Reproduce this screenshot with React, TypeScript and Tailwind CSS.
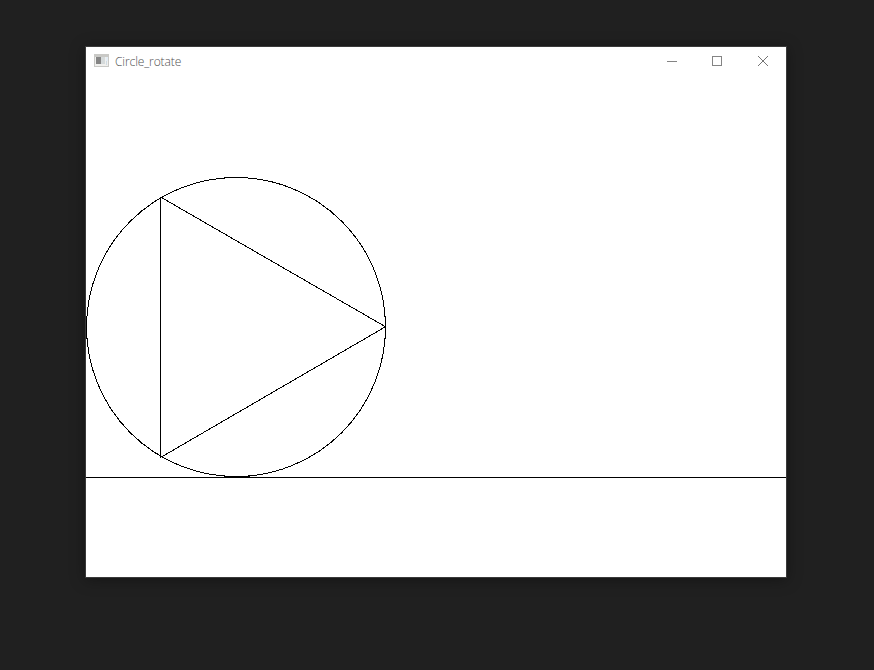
export default function App() {
  return (
    <div className="flex h-[670px] w-[874px] justify-center overflow-hidden bg-[#202020] pt-[46px] pr-0.5">
      <main className="flex h-[532px] w-[702px] flex-col border border-[#3a3a3a] bg-white shadow-[0_2px_14px_rgba(0,0,0,0.35)]">
        <header className="flex h-[30px] shrink-0 items-center justify-between pl-2">
          <div className="flex items-center gap-[6px]">
            <svg width="15" height="13" viewBox="0 0 15 13" shapeRendering="crispEdges" className="-mt-[3px]">
              <rect x="0" y="0" width="15" height="13" fill="#c9c9c6" />
              <rect x="1" y="3" width="13" height="9" fill="#f0f0ee" />
              <rect x="2" y="3" width="5" height="7" fill="#858585" />
              <rect x="7" y="3" width="4" height="7" fill="#d5dadb" />
              <rect x="12" y="3" width="2" height="4" fill="#e4edf5" />
              <rect x="12" y="7" width="1" height="4" fill="#d0dbe3" />
            </svg>
            <h1 className="font-['Open_Sans',sans-serif] text-xs leading-4 font-light tracking-[-0.1px] text-[#505050]">Circle_rotate</h1>
          </div>
          <div className="flex h-full">
            <button aria-label="Minimize" className="flex w-[44px] items-center justify-center">
              <svg width="10" height="10" shapeRendering="crispEdges" className="-mt-0.5"><path d="M0 5.5H10" stroke="#848484" /></svg>
            </button>
            <button aria-label="Maximize" className="flex w-[46px] items-center justify-center">
              <svg width="10" height="10" shapeRendering="crispEdges" className="-mt-0.5"><rect x=".5" y=".5" width="9" height="9" fill="none" stroke="#848484" /></svg>
            </button>
            <button aria-label="Close" className="flex w-[46px] items-center justify-center">
              <svg width="10" height="10" className="-mt-0.5"><path d="M0 0L10 10M10 0L0 10" stroke="#747474" /></svg>
            </button>
          </div>
        </header>
        <svg width="700" height="500" viewBox="0 0 700 500" shapeRendering="crispEdges" fill="none" stroke="#000">
          <circle cx="150" cy="250" r="149.5" />
          <path d="M74.5 120L299.5 249.75L74.5 380.5Z" strokeLinejoin="bevel" />
          <path d="M299.5 240V262M0.5 240V262M138 100.5H155M138 399.5H164" />
          <path d="M0 400.5H700" />
        </svg>
      </main>
    </div>
  );
}
